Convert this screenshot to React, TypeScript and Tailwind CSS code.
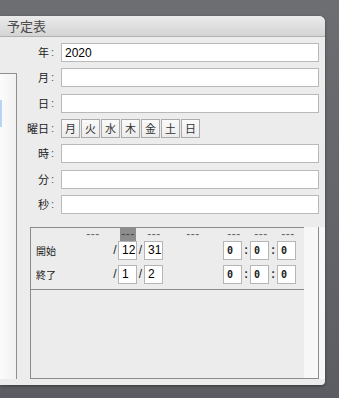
import React from "react";

const jp = { fontFamily: '"Noto Sans CJK JP", "Noto Sans", sans-serif' };
const sans = { fontFamily: '"Liberation Sans", Arial, sans-serif' };
const mono = { fontFamily: '"DejaVu Sans Mono", "Liberation Mono", monospace' };

function Label({ t }: { t: string }) {
  return (
    <div className="w-[40px] flex justify-end items-center text-[11px] text-[#222] leading-none pr-[3px] whitespace-nowrap" style={jp}>
      <span>{t}</span>
      <span className="ml-[2px] text-[#555]" style={sans}>:</span>
    </div>
  );
}

function Row({ label, value }: { label: string; value?: string }) {
  return (
    <div className="flex items-center h-[19px]">
      <Label t={label} />
      <div className="ml-[4px] w-[258px] h-[19px] bg-white border border-[#b9b9b9] flex items-center pl-[3px] text-[12px] text-black" style={sans}>
        {value}
      </div>
    </div>
  );
}

function DBox({ v, m }: { v: string; m?: boolean }) {
  return (
    <div
      className={
        "w-[19px] h-[19px] bg-white border border-[#b5b5b5] flex items-center pl-[3px] " +
        (m ? "text-[10px] font-bold text-[#222]" : "text-[12px] text-black")
      }
      style={m ? mono : sans}
    >
      {v}
    </div>
  );
}

function Sep({ c, w }: { c: string; w: string }) {
  return (
    <div className={"flex items-center justify-center text-[12px] text-[#222] " + w} style={c === ":" ? mono : sans}>
      {c}
    </div>
  );
}

function DateRow({ label, m, d }: { label: string; m: string; d: string }) {
  return (
    <div className="flex items-center h-[19px]">
      <div className="w-[81px] pl-[5px] text-[10px] text-[#222]" style={jp}>
        {label}
      </div>
      <Sep c="/" w="w-[6px]" />
      <DBox v={m} />
      <Sep c="/" w="w-[7px]" />
      <DBox v={d} />
      <div className="w-[60px]" />
      <DBox v="0" m />
      <Sep c=":" w="w-[8px]" />
      <DBox v="0" m />
      <Sep c=":" w="w-[8px]" />
      <DBox v="0" m />
    </div>
  );
}

function Dash({ hl }: { hl?: boolean }) {
  return (
    <div
      className={
        "w-[16px] h-[14px] flex items-center justify-center whitespace-nowrap text-[12px] leading-none tracking-[0.5px] " +
        (hl ? "bg-[#8d8d8d] text-[#444]" : "text-[#666]")
      }
      style={sans}
    >
      ---
    </div>
  );
}

export default function App() {
  const days = ["月", "火", "水", "木", "金", "土", "日"];
  return (
    <div className="w-[339px] h-[398px] overflow-hidden bg-gradient-to-b from-[#6d6e72] to-[#5c5d62] pt-[16px]">
      <div className="w-[325px] h-[369px] bg-[#ececec] rounded-tr-[6px] rounded-br-[4px] flex flex-col overflow-hidden shadow-[0_1px_3px_rgba(0,0,0,0.4)]">
        <div className="h-[21px] shrink-0 bg-gradient-to-b from-[#ebebeb] to-[#d4d4d4] border-b border-[#b1b1b1] flex items-center pl-[7px] text-[13px] text-[#4b4b4b]" style={jp}>
          予定表
        </div>
        <div className="flex flex-1">
          <div className="w-[17px] mt-[36px] mb-[6px] border-t border-r border-[#8f8f8f] bg-gradient-to-r from-[#fbfbfb] to-[#f1f1f1] flex flex-col">
            <div className="mt-[26px] w-[2px] h-[27px] bg-[#b6d4f6]" />
          </div>
          <div className="flex-1 flex flex-col pt-[6px]">
            <div className="flex flex-col gap-[6.33px]">
              <Row label="年" value="2020" />
              <Row label="月" />
              <Row label="日" />
              <div className="flex items-center h-[19px]">
                <Label t="曜日" />
                <div className="ml-[4px] flex gap-[1px]">
                  {days.map((d) => (
                    <div
                      key={d}
                      className="w-[19px] h-[19px] bg-gradient-to-b from-[#fafafa] to-[#ececec] border border-[#ababab] flex items-center justify-center text-[11px] text-[#333]"
                      style={jp}
                    >
                      {d}
                    </div>
                  ))}
                </div>
              </div>
              <Row label="時" />
              <Row label="分" />
              <Row label="秒" />
            </div>
            <div className="mt-[13px] ml-[13px] flex h-[158px]">
              <div className="w-[289px] h-[152px] border border-[#8b8b8b] flex">
                <div className="flex-1 flex flex-col">
                  <div className="flex h-[13px] -mt-px">
                    <div className="w-[54px]" />
                    <Dash />
                    <div className="w-[19px]" />
                    <Dash hl />
                    <div className="w-[10px]" />
                    <Dash />
                    <div className="w-[23px]" />
                    <Dash />
                    <div className="w-[25px]" />
                    <Dash />
                    <div className="w-[11px]" />
                    <Dash />
                    <div className="w-[11px]" />
                    <Dash />
                  </div>
                  <div className="flex flex-col gap-[5px] mt-[1px] pb-[5px] border-b border-[#8b8b8b]">
                    <DateRow label="開始" m="12" d="31" />
                    <DateRow label="終了" m="1" d="2" />
                  </div>
                </div>
                <div className="w-[14px] bg-[#f7f7f7] -mt-px" />
              </div>
              <div className="w-[6px] h-[152px] bg-[#f7f7f7]" />
            </div>
          </div>
        </div>
      </div>
    </div>
  );
}
